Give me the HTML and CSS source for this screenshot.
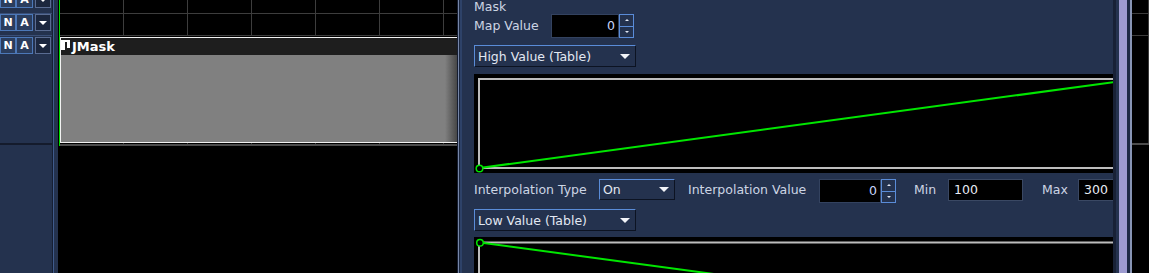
FILE: index.html
```html
<!DOCTYPE html>
<html lang="en">
<head>
    <meta charset="UTF-8">
    <meta name="viewport" content="width=device-width, initial-scale=1.0">
    <title>JMask</title>
    <link rel="stylesheet" href="styles.css">
</head>
<body>
    <div class="app">
        <!-- Track headers -->
        <aside class="track-headers">
            <div class="headers-col">
                <div class="track-header first">
                    <button class="tbtn">N</button><button class="tbtn a">A</button><button class="tbtn menu"><span class="tri"></span></button>
                </div>
                <div class="track-header second">
                    <button class="tbtn">N</button><button class="tbtn a">A</button><button class="tbtn menu"><span class="tri"></span></button>
                </div>
                <div class="track-header third">
                    <button class="tbtn">N</button><button class="tbtn a">A</button><button class="tbtn menu"><span class="tri"></span></button>
                </div>
            </div>
            <div class="headers-gutter"></div>
        </aside>

        <!-- Timeline -->
        <section class="timeline">
            <div class="lanes">
                <div class="lane first"></div>
                <div class="lane second"></div>
                <div class="lane third">
                    <div class="clip">
                        <div class="clip-head">
                            <svg class="clip-icon" width="9" height="10" viewBox="0 0 9 10">
                                <rect x="0" y="0" width="4" height="10" fill="#fff"/>
                                <rect x="0" y="0" width="9" height="2" fill="#fff"/>
                                <rect x="6" y="0" width="3" height="8" fill="#fff"/>
                            </svg>
                            <span>JMask</span>
                        </div>
                        <div class="clip-body"></div>
                    </div>
                </div>
            </div>
        </section>

        <!-- Inspector -->
        <section class="inspector">
            <div class="section-title">Mask</div>

            <div class="field-row map-row">
                <span class="label map">Map Value</span>
                <div class="spinbox">
                    <span class="spin-value map">0</span>
                    <span class="spin-btns"><span class="spin-up"></span><span class="spin-down"></span></span>
                </div>
            </div>

            <div class="combo wide">
                <span>High Value (Table)</span><span class="combo-arrow"></span>
            </div>

            <svg class="graph" width="668" height="99" viewBox="0 0 668 99">
                <rect x="0" y="0" width="668" height="99" fill="#000"/>
                <rect x="5" y="5" width="658" height="89" fill="none" stroke="#bdbdbd" stroke-width="2"/>
                <line x1="5.5" y1="94" x2="663" y2="5" stroke="#00e600" stroke-width="2"/>
                <circle cx="5.5" cy="94.5" r="3.3" fill="#000" stroke="#00e600" stroke-width="1.5"/>
            </svg>

            <div class="field-row interp-row">
                <span class="label type">Interpolation Type</span>
                <div class="combo small">
                    <span>On</span><span class="combo-arrow"></span>
                </div>
                <span class="label value">Interpolation Value</span>
                <div class="spinbox">
                    <span class="spin-value interp">0</span>
                    <span class="spin-btns"><span class="spin-up"></span><span class="spin-down"></span></span>
                </div>
                <span class="label min">Min</span>
                <span class="field">100</span>
                <span class="label max">Max</span>
                <span class="field">300</span>
            </div>

            <div class="combo wide low">
                <span>Low Value (Table)</span><span class="combo-arrow"></span>
            </div>

            <svg class="graph low" width="668" height="99" viewBox="0 0 668 99">
                <rect x="0" y="0" width="668" height="99" fill="#000"/>
                <rect x="5" y="5.5" width="658" height="89" fill="none" stroke="#bdbdbd" stroke-width="2"/>
                <line x1="6" y1="5.5" x2="663" y2="94" stroke="#00e600" stroke-width="2"/>
                <circle cx="6" cy="5.7" r="3.3" fill="#000" stroke="#00e600" stroke-width="1.5"/>
            </svg>
        </section>

        <!-- Scrollbar edge -->
        <div class="vscroll"></div>

        <!-- Timeline behind, right side -->
        <section class="timeline strip">
            <div class="lanes">
                <div class="lane first"></div>
                <div class="lane second"></div>
                <div class="lane third"></div>
            </div>
        </section>
    </div>
</body>
</html>
```

FILE: styles.css
```css
/* Basic reset */
body, html {
    margin: 0;
    padding: 0;
    overflow: hidden;
    background-color: #000;
    font-family: "DejaVu Sans", sans-serif;
    font-size: 12.5px;
}

* {
    box-sizing: border-box;
}

.app {
    display: flex;
    width: 1149px;
    height: 273px;
}

/* Track headers */
.track-headers {
    display: flex;
    flex: none;
    background-color: #24324e;
}

.headers-col {
    width: 53px;
    border-right: 1px solid #161f33;
}

.headers-gutter {
    width: 5px;
    border-left: 1px solid #3f5b8c;
}

.track-header {
    display: flex;
    align-items: flex-start;
    border-bottom: 1px solid #3a4f77;
    box-sizing: content-box;
}

.track-header.first {
    height: 22px;
    margin-top: -9px;
}

.track-header.second {
    height: 21px;
}

.track-header.third {
    height: 106px;
    padding-top: 1px;
    border-bottom: 2px solid #141b2c;
}

.tbtn {
    width: 16px;
    height: 17px;
    margin: 0;
    padding: 0;
    border: 1px solid #4c78b8;
    background-color: #2b3d5d;
    color: #fff;
    font: bold 11px "DejaVu Sans", sans-serif;
    line-height: 15px;
}

.tbtn.a {
    width: 17px;
}

.tbtn.menu {
    margin-left: 2px;
    display: flex;
    align-items: center;
    justify-content: center;
    background-color: #1c273e;
    border-color: #5a6c92;
}

.tri {
    border-left: 4px solid transparent;
    border-right: 4px solid transparent;
    border-top: 4px solid #fff;
}

/* Timeline */
.timeline {
    flex: none;
    width: 399px;
    background-color: #000;
}

.lanes {
    margin-left: 1px;
    border-left: 1px solid #00e000;
}

.lane {
    background-image: linear-gradient(to right, transparent 63px, #3d3d3d 63px);
    background-size: 64px 100%;
    border-bottom: 1px solid #3d3d3d;
    box-sizing: content-box;
}

.lane.first {
    height: 13px;
}

.lane.second {
    height: 21px;
}

.lane.third {
    height: 107px;
    border-bottom: 2px solid #4c4c4c;
}

.timeline.strip {
    width: 17px;
}

.strip .lanes {
    margin-left: 0;
    border-left: none;
}

.strip .lane {
    background-position: 17px 0;
}

/* Clip */
.clip {
    display: flex;
    flex-direction: column;
    margin-top: 1px;
    height: 106px;
    border: 1px solid #f2f2f2;
    border-right: none;
}

.clip-head {
    display: flex;
    align-items: flex-start;
    height: 17px;
    background-color: #1e1e1e;
    color: #fff;
    font-weight: bold;
    font-size: 13px;
    line-height: 17px;
}

.clip-icon {
    margin: 2px 2px 0 0;
}

.clip-body {
    flex: 1;
    background: linear-gradient(to right, #808080 calc(100% - 12px), #474747);
}

/* Inspector */
.inspector {
    flex: none;
    width: 656px;
    padding-left: 16px;
    border-left: 1px solid #151d30;
    box-shadow: inset 1px 0 #7686a8, inset 2px 0 #1b2740, inset 4px 0 #2e4268;
    background-color: #24324e;
    color: #cdd5e4;
    overflow: hidden;
}

.section-title {
    height: 12px;
    line-height: 13px;
}

.field-row {
    display: flex;
    white-space: nowrap;
}

.map-row {
    margin-top: 2px;
    height: 24px;
    align-items: center;
}

.label.map {
    width: 77px;
}

.spinbox {
    display: flex;
    flex: none;
    height: 24px;
}

.spin-value {
    height: 24px;
    padding-right: 3px;
    border: 1px solid #33425f;
    background-color: #000;
    color: #c9d6fb;
    text-align: right;
    line-height: 22px;
}

.spin-value.map {
    width: 68px;
}

.spin-value.interp {
    width: 62px;
}

.spin-btns {
    display: flex;
    flex-direction: column;
    width: 15px;
    border: 1px solid #5a8cd8;
    background-color: #24324e;
}

.spin-up,
.spin-down {
    flex: 1;
    display: flex;
    align-items: center;
    justify-content: center;
}

.spin-up {
    border-bottom: 1px solid #5a8cd8;
}

.spin-up::after {
    content: "";
    border-left: 2px solid transparent;
    border-right: 2px solid transparent;
    border-bottom: 2px solid #e0e6f2;
}

.spin-down::after {
    content: "";
    border-left: 2px solid transparent;
    border-right: 2px solid transparent;
    border-top: 2px solid #e0e6f2;
}

.combo {
    display: flex;
    flex: none;
    align-items: center;
    justify-content: space-between;
    height: 22px;
    padding: 0 5px 0 3px;
    border: 1px solid;
    border-color: #5a8cd8 #0c1322 #0c1322 #5a8cd8;
    color: #e2e8f2;
}

.combo.wide {
    width: 162px;
    margin-top: 7px;
}

.combo.wide.low {
    margin-top: 6px;
}

.combo.small {
    width: 76px;
    height: 21px;
}

.combo-arrow {
    border-left: 5px solid transparent;
    border-right: 5px solid transparent;
    border-top: 5px solid #f2f4f8;
}

.graph {
    display: block;
    margin-top: 7px;
}

.graph.low {
    margin-top: 6px;
}

.interp-row {
    margin-top: 6px;
    height: 24px;
    align-items: flex-start;
}

.label {
    flex: none;
    line-height: 22px;
}

.label.type {
    width: 125px;
}

.label.value {
    width: 144px;
    padding-left: 13px;
}

.label.min {
    width: 52px;
    padding-left: 18px;
}

.label.max {
    width: 55px;
    padding-left: 19px;
}

.field {
    flex: none;
    width: 75px;
    height: 22px;
    padding-left: 5px;
    border: 1px solid #3a4863;
    background-color: #000;
    color: #e8ecf4;
    line-height: 20px;
}

/* Scrollbar edge */
.vscroll {
    flex: none;
    width: 19px;
    background: linear-gradient(to right,
        #182136 0 3px,
        #24324e 3px 6px,
        #9d9bd0 6px 14px,
        #1d2a45 14px 17px,
        #8895b5 17px 19px);
}
```
